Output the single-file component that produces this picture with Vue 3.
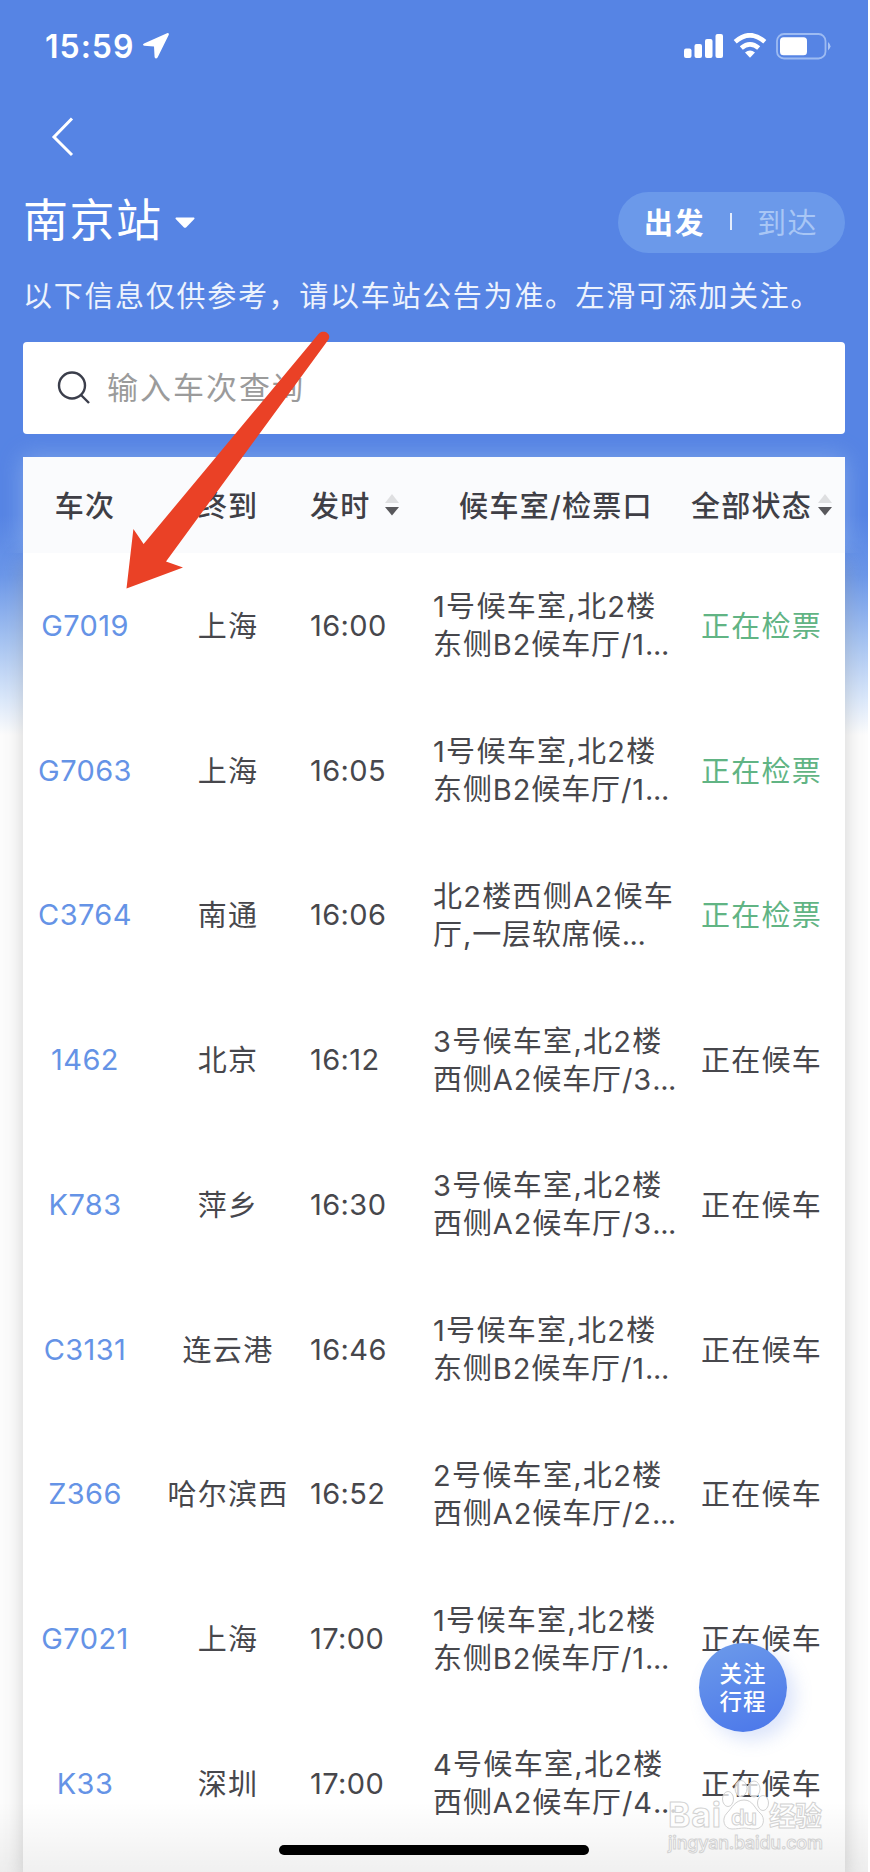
<script setup>
import { ref, computed } from 'vue';

const station = ref('南京站');
const direction = ref('depart');
const keyword = ref('');

const trains = ref([
  { no: 'G7019', to: '上海', time: '16:00', room: ['1号候车室,北2楼', '东侧B2候车厅/1'], status: '正在检票' },
  { no: 'G7063', to: '上海', time: '16:05', room: ['1号候车室,北2楼', '东侧B2候车厅/1'], status: '正在检票' },
  { no: 'C3764', to: '南通', time: '16:06', room: ['北2楼西侧A2候车', '厅,一层软席候'], status: '正在检票' },
  { no: '1462', to: '北京', time: '16:12', room: ['3号候车室,北2楼', '西侧A2候车厅/3'], status: '正在候车' },
  { no: 'K783', to: '萍乡', time: '16:30', room: ['3号候车室,北2楼', '西侧A2候车厅/3'], status: '正在候车' },
  { no: 'C3131', to: '连云港', time: '16:46', room: ['1号候车室,北2楼', '东侧B2候车厅/1'], status: '正在候车' },
  { no: 'Z366', to: '哈尔滨西', time: '16:52', room: ['2号候车室,北2楼', '西侧A2候车厅/2'], status: '正在候车' },
  { no: 'G7021', to: '上海', time: '17:00', room: ['1号候车室,北2楼', '东侧B2候车厅/1'], status: '正在候车' },
  { no: 'K33', to: '深圳', time: '17:00', room: ['4号候车室,北2楼', '西侧A2候车厅/4'], status: '正在候车' },
]);

const filteredTrains = computed(() => {
  const key = keyword.value.trim().toUpperCase();
  return trains.value.filter((train) => train.no.includes(key));
});
</script>

<template>
  <div class="page">
    <div class="status-bar">
      <div class="clock">
        <span>15:59</span>
        <svg class="location" width="28" height="28" viewBox="0 0 28 28">
          <path d="M25 1.200 2 11.400q-2.200 1.600.2 2.400l9.800.8.6 10.600q1.200 2.600 3 .2L26.800 2.800q.4-2.200-1.800-1.600z" />
        </svg>
      </div>
      <div class="signals">
        <svg width="40" height="26" viewBox="0 0 40 26">
          <rect x="0" y="15.500" width="7.500" height="9.500" rx="2" />
          <rect x="10.500" y="11" width="7.500" height="14" rx="2" />
          <rect x="21" y="6" width="7.500" height="19" rx="2" />
          <rect x="31.500" y="1" width="7.500" height="24" rx="2" />
        </svg>
        <svg class="wifi" width="34" height="26" viewBox="0 0 34 26">
          <path d="M2.200 8.700Q17-4.200 31.800 8.700M8.300 15.100q8.700-7.600 17.400 0" fill="none" stroke="#fff" stroke-width="4.600" />
          <path d="M12 19.500q5-4 10 0l-5 5.300z" />
        </svg>
        <svg class="battery" width="56" height="27" viewBox="0 0 56 27">
          <rect x="1" y="1" width="48.500" height="24.500" rx="7" fill="none" stroke="#9dbbf2" stroke-width="1.800" />
          <rect x="4" y="4.300" width="27" height="18" rx="3.500" />
          <path d="M52 9q5 4.300 0 8.600z" fill="#a9c3f4" />
        </svg>
      </div>
    </div>

    <div class="nav">
      <svg width="24" height="40" viewBox="0 0 24 40">
        <path d="M21 1.500 3 20l18 18" fill="none" stroke="#fff" stroke-width="3" />
      </svg>
    </div>

    <div class="station-row">
      <div class="station">
        <span>{{ station }}</span>
        <svg width="20" height="12" viewBox="0 0 20 12">
          <path d="M1 .5h18q1 .5.3 1.500l-8 8.300q-1.300 1-2.600 0L.7 2Q0 1 1 .5z" />
        </svg>
      </div>
      <div class="switcher">
        <span :class="{ active: direction === 'depart' }" @click="direction = 'depart'">出发</span>
        <i class="split"></i>
        <span :class="{ active: direction === 'arrive' }" @click="direction = 'arrive'">到达</span>
      </div>
    </div>

    <p class="notice">以下信息仅供参考，请以车站公告为准。左滑可添加关注。</p>

    <div class="search">
      <svg width="34" height="34" viewBox="0 0 34 34">
        <circle cx="15" cy="14.500" r="13" />
        <path d="m23.500 23.500 8.500 8.500" />
      </svg>
      <input v-model="keyword" placeholder="输入车次查询" />
    </div>

    <div class="table">
      <div class="row head">
        <div class="no">车次</div>
        <div class="to">终到</div>
        <div class="time">
          发时
          <svg class="sort" width="14" height="22" viewBox="0 0 14 22">
            <path d="M7 0l7 9H0z" fill="#dedfe1" />
            <path d="M0 13h14l-7 8.500z" fill="#58585c" />
          </svg>
        </div>
        <div class="room">候车室/检票口</div>
        <div class="status">
          全部状态
          <svg class="sort" width="14" height="22" viewBox="0 0 14 22">
            <path d="M7 0l7 9H0z" fill="#dedfe1" />
            <path d="M0 13h14l-7 8.500z" fill="#58585c" />
          </svg>
        </div>
      </div>
      <div class="list">
        <div v-for="train in filteredTrains" :key="train.no" class="row">
          <div class="no">{{ train.no }}</div>
          <div class="to">{{ train.to }}</div>
          <div class="time">{{ train.time }}</div>
          <div class="room">
            <div>{{ train.room[0] }}</div>
            <div class="cut">{{ train.room[1] }}<span class="dots">...</span></div>
          </div>
          <div class="status" :class="{ checking: train.status === '正在检票' }">{{ train.status }}</div>
        </div>
      </div>
    </div>

    <div class="bottom-fade"></div>

    <button class="follow">关注<br />行程</button>

    <div class="home-bar"></div>

    <svg class="watermark" width="160" height="78" viewBox="0 0 160 78">
      <g class="wm-shape">
        <ellipse cx="63" cy="19" rx="5.500" ry="7.500" />
        <ellipse cx="76" cy="8.500" rx="6" ry="8" />
        <ellipse cx="89" cy="9" rx="6" ry="8" />
        <ellipse cx="98" cy="23" rx="5.500" ry="7.500" />
        <path d="M79 20c9 0 11 9 16 13 6 5 4 16-5 16-5 0-8-1-11-1s-7 1-12 1c-8 0-11-10-5-16 5-5 8-13 17-13z" />
      </g>
      <text x="3" y="47" class="wm-logo" textLength="53">Bai</text>
      <text x="66" y="45" class="wm-du" textLength="26">du</text>
      <text x="104" y="46" class="wm-cn" textLength="53">经验</text>
      <text x="3" y="69" class="wm-url" textLength="155">jingyan.baidu.com</text>
    </svg>

    <svg class="arrow" width="210" height="270" viewBox="0 0 210 270">
      <path d="M6.500 268.500 13.400 209l10.200 15L198.500 14c4.500-5 13.500-.5 10 5.500L46 241.500l17 6z" />
    </svg>
  </div>
</template>

<style>
body {
  margin: 0;
  background-color: #ffffff;
}
</style>

<style scoped>
.page {
  position: relative;
  box-sizing: border-box;
  width: 868px;
  height: 1872px;
  padding: 0 23px;
  overflow: hidden;
  display: flex;
  flex-direction: column;
  font-family: Inter, "Noto Sans CJK SC", sans-serif;
  font-size: 29px;
  color: #47474c;
  background: linear-gradient(#5684e4 0, #5684e4 515px, #6b97e9 575px, #a5c3f2 640px, #dce9fb 700px, #fdfdfd 735px);
}

.status-bar {
  flex: none;
  height: 92px;
  padding: 0 13px 0 22px;
  display: flex;
  align-items: center;
  justify-content: space-between;
  color: #ffffff;
}

.status-bar svg,
.station svg {
  fill: #ffffff;
}

.clock {
  display: flex;
  align-items: center;
  font-size: 32px;
  font-weight: 600;
  letter-spacing: 1px;
}

.location {
  margin-left: 8px;
}

.signals {
  display: flex;
  align-items: center;
}

.wifi {
  margin-left: 9px;
}

.battery {
  margin-left: 9px;
}

.nav {
  flex: none;
  height: 90px;
  padding-left: 28px;
  display: flex;
  align-items: center;
}

.station-row {
  flex: none;
  height: 81px;
  display: flex;
  align-items: center;
  justify-content: space-between;
  color: #ffffff;
}

.station {
  display: flex;
  align-items: center;
  font-size: 45px;
  letter-spacing: 1.5px;
}

.station span {
  padding-bottom: 10px;
}

.station svg {
  margin-left: 12px;
}

.switcher {
  box-sizing: border-box;
  width: 227px;
  height: 61px;
  padding: 0 27px 3px 26px;
  border-radius: 31px;
  display: flex;
  align-items: center;
  justify-content: space-between;
  letter-spacing: 1.5px;
  color: #a8c6f5;
  background-color: #6b99ea;
}

.switcher .active {
  font-weight: 700;
  color: #ffffff;
}

.split {
  width: 2px;
  height: 17px;
  background-color: #e4edfc;
}

.notice {
  flex: none;
  height: 66px;
  margin: 0;
  line-height: 68px;
  letter-spacing: 1.7px;
  white-space: nowrap;
  color: #edf3fd;
}

.search {
  flex: none;
  height: 92px;
  margin: 13px 0 23px;
  padding-left: 34px;
  border-radius: 4px;
  display: flex;
  align-items: center;
  background-color: #ffffff;
}

.search svg {
  fill: none;
  stroke: #3b3e4b;
  stroke-width: 2.4;
}

.search input {
  flex: 1;
  margin-left: 16px;
  padding: 0 0 2px;
  border: none;
  outline: none;
  font-family: inherit;
  font-size: 31px;
  letter-spacing: 2px;
  background: none;
}

.search input::placeholder {
  color: #9b9b9b;
}

.table {
  flex: none;
}

.row {
  display: grid;
  grid-template-columns: 122px 165px 123px 246px 165px;
  align-items: center;
  height: 144.75px;
  letter-spacing: 1.3px;
  white-space: nowrap;
}

.list {
  height: 1320px;
  background-color: #ffffff;
  box-shadow: 0 8px 20px rgba(150, 150, 150, 0.42);
}

.head {
  position: relative;
  z-index: 1;
  height: 96px;
  font-weight: 500;
  color: #3f3f46;
  background-color: #fafbfd;
  box-shadow: 0 0 22px rgba(175, 205, 240, 0.45);
  clip-path: inset(-24px -24px 0);
}

.no,
.to,
.status {
  text-align: center;
}

.no {
  padding-left: 2px;
}

.to {
  padding-left: 1px;
}

.list .no {
  letter-spacing: 0.4px;
  color: #6593e6;
}

.list .time {
  letter-spacing: 0.4px;
}

.list .to,
.list .status,
.head > div {
  padding-bottom: 3px;
}

.list .room {
  padding-top: 2px;
  line-height: 38px;
}

.cut {
  letter-spacing: 0.9px;
}

.dots {
  letter-spacing: -0.4px;
}

.head .room {
  text-align: center;
}

.head .time,
.head .status {
  display: flex;
  align-items: center;
}

.head .status {
  justify-content: center;
}

.sort {
  margin: 3px 0 0 14px;
}

.head .status .sort {
  margin-left: 6px;
}

.checking {
  color: #61b484;
}

.bottom-fade {
  position: absolute;
  left: 0;
  right: 0;
  bottom: 0;
  height: 70px;
  background: linear-gradient(rgba(0, 0, 0, 0), rgba(0, 0, 0, 0.06));
}

.follow {
  position: absolute;
  left: 699px;
  top: 1643px;
  width: 88px;
  height: 89px;
  padding: 0;
  border: none;
  border-radius: 50%;
  font-family: inherit;
  font-size: 22.5px;
  font-weight: 500;
  line-height: 28px;
  letter-spacing: 1px;
  color: #ffffff;
  background: linear-gradient(160deg, #6d9bea, #4a76ea);
  box-shadow: 8px 8px 18px rgba(90, 130, 230, 0.22);
}

.home-bar {
  position: absolute;
  left: 279px;
  bottom: 17px;
  width: 310px;
  height: 10px;
  border-radius: 5px;
  background-color: #000000;
}

.watermark {
  position: absolute;
  left: 665px;
  top: 1780px;
}

.wm-shape,
.watermark text {
  fill: rgba(255, 255, 255, 0.75);
  stroke: #d2d2d2;
  stroke-width: 1;
}

.wm-logo {
  font-size: 34px;
  font-weight: 700;
}

.watermark .wm-du {
  font-size: 22px;
  font-weight: 600;
}

.wm-cn {
  font-size: 27px;
  font-weight: 700;
}

.wm-url {
  font-size: 18px;
  font-weight: 500;
}

.arrow {
  position: absolute;
  z-index: 2;
  left: 120px;
  top: 320px;
  fill: #ea4126;
}
</style>
